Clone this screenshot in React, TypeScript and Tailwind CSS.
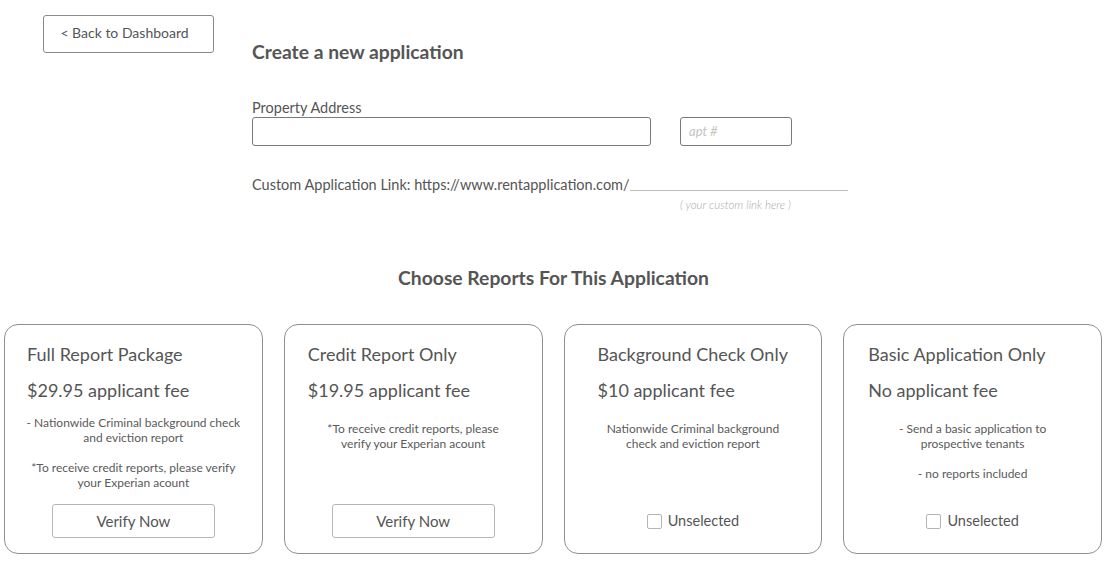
import React from "react";

type Card = {
  title: string;
  price: string;
  pl: string;
  descTop: string;
  paras: string[][];
  action: "verify" | "check";
};

const cards: Card[] = [
  {
    title: "Full Report Package",
    price: "$29.95 applicant fee",
    pl: "pl-[22px]",
    descTop: "mt-[13px]",
    paras: [
      ["- Nationwide Criminal background check", "and eviction report"],
      ["*To receive credit reports, please verify", "your Experian acount"],
    ],
    action: "verify",
  },
  {
    title: "Credit Report Only",
    price: "$19.95 applicant fee",
    pl: "pl-[23px]",
    descTop: "mt-[19px]",
    paras: [["*To receive credit reports, please", "verify your Experian acount"]],
    action: "verify",
  },
  {
    title: "Background Check Only",
    price: "$10 applicant fee",
    pl: "pl-[33px]",
    descTop: "mt-[19px]",
    paras: [["Nationwide Criminal background", "check and eviction report"]],
    action: "check",
  },
  {
    title: "Basic Application Only",
    price: "No applicant fee",
    pl: "pl-[24px]",
    descTop: "mt-[19px]",
    paras: [["- Send a basic application to", "prospective tenants"], ["- no reports included"]],
    action: "check",
  },
];

function ReportCard({ c }: { c: Card }) {
  return (
    <div className="flex-1 h-[230px] border border-[#8f8f8f] rounded-[14px] flex flex-col">
      <div className={`${c.pl} pt-[17px]`}>
        <div className="text-[18px] leading-[24px] text-[#555]">{c.title}</div>
        <div className="mt-[12px] text-[18px] leading-[24px] text-[#555]">{c.price}</div>
      </div>
      <div className={`${c.descTop} flex flex-col gap-[15px] text-center text-[12px] leading-[15px] text-[#5a5a5a]`}>
        {c.paras.map((p, i) => (
          <div key={i}>
            {p.map((l, j) => (
              <div key={j}>{l}</div>
            ))}
          </div>
        ))}
      </div>
      <div className="flex-1" />
      <div className="flex justify-center pb-[15px]">
        {c.action === "verify" ? (
          <button className="w-[163px] h-[34px] border border-[#b5b5b5] rounded-[3px] text-[15px] text-[#555] bg-white">
            Verify Now
          </button>
        ) : (
          <div className="h-[34px] flex items-center gap-[6px]">
            <span className="w-[15px] h-[15px] border border-[#b5b5b5] rounded-[2px] bg-white" />
            <span className="text-[14.5px] text-[#555]">Unselected</span>
          </div>
        )}
      </div>
    </div>
  );
}

export default function App() {
  return (
    <div className="w-[1107px] h-[583px] bg-white text-[#555] font-['Lato','Noto_Sans',sans-serif] overflow-hidden">
      <div className="flex pt-[15px] pl-[43px]">
        <button className="w-[171px] h-[38px] border border-[#8a8a8a] rounded-[3px] text-[14px] text-[#555] bg-white pb-[3px] pr-[8px]">
          &lt; Back to Dashboard
        </button>
        <div className="ml-[38px] pt-[25px] flex flex-col">
          <h1 className="text-[19.3px] leading-[24px] font-bold text-[#555]">Create a new application</h1>
          <div className="mt-[36px] text-[14.5px] leading-[16px] text-[#555]">Property Address</div>
          <div className="mt-[1px] flex">
            <div className="w-[399px] h-[29px] border border-[#7a7a7a] rounded-[3px]" />
            <div className="ml-[29px] w-[112px] h-[29px] border border-[#7a7a7a] rounded-[3px] flex items-center pl-[8px] text-[13px] italic text-[#c4c4c4]">
              apt #
            </div>
          </div>
          <div className="mt-[30px] flex items-end text-[14.5px] leading-[18px] text-[#555]">
            <span>Custom Application Link: https://www.rentapplication.com/</span>
            <span className="inline-block w-[218px] border-b border-[#bdbdbd] mb-[3px]" />
          </div>
          <div className="mt-[5px] pl-[428px] text-[11.5px] italic leading-[12px] text-[#a8a8a8] font-light">
            ( your custom link here )
          </div>
        </div>
      </div>
      <h2 className="mt-[55px] text-center text-[19.3px] leading-[24px] font-bold text-[#555]">
        Choose Reports For This Application
      </h2>
      <div className="mt-[34px] flex gap-[21px] pl-[4px] pr-[5px]">
        {cards.map((c) => (
          <ReportCard key={c.title} c={c} />
        ))}
      </div>
    </div>
  );
}
